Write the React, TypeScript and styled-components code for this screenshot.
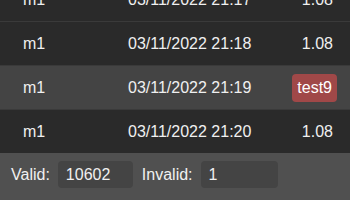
import React from "react";
import styled, { createGlobalStyle } from "styled-components";

const Global = createGlobalStyle`
  html, body { margin: 0; padding: 0; background: #505050; }
  body { font-family: "Liberation Sans", Arial, sans-serif; font-size: 16px; color: #f0f0f0; overflow: hidden; }
`;

const Page = styled.div`
  width: 350px;
  height: 200px;
  overflow: hidden;
  display: flex;
  flex-direction: column;
`;

const List = styled.div`
  margin-top: -22px;
  display: flex;
  flex-direction: column;
`;

const Row = styled.div<{ $active?: boolean; $last?: boolean }>`
  display: grid;
  grid-template-columns: 105px 1fr auto;
  align-items: center;
  height: 43px;
  padding: 0 17px 0 23px;
  background: ${(p) => (p.$active ? "#444444" : "#2a2a2a")};
  border-bottom: ${(p) => (p.$last ? "none" : "1px solid #3a3a3a")};
`;

const Cell = styled.span<{ $right?: boolean }>`
  text-align: ${(p) => (p.$right ? "right" : "left")};
  white-space: nowrap;
`;

const Badge = styled.span`
  display: inline-block;
  background: #a04848;
  color: #fff;
  border-radius: 4px;
  padding: 0 5px;
  height: 28px;
  line-height: 28px;
  margin-right: -4px;
`;

const Footer = styled.div`
  display: flex;
  align-items: center;
  padding: 8px 11px;
  background: #505050;
  flex: 1;
  align-items: flex-start;
`;

const Label = styled.span`
  margin-right: 8px;
  line-height: 27px;
`;

const Box = styled.div<{ $w: number }>`
  width: ${(p) => p.$w}px;
  height: 27px;
  line-height: 27px;
  box-sizing: border-box;
  padding-left: 8px;
  background: #444444;
  border-radius: 4px;
  margin-right: 9px;
`;

const rows = [
  { name: "m1", time: "03/11/2022 21:17", value: "1.08" },
  { name: "m1", time: "03/11/2022 21:18", value: "1.08" },
  { name: "m1", time: "03/11/2022 21:19", value: "test9", bad: true },
  { name: "m1", time: "03/11/2022 21:20", value: "1.08" },
];

export default function App() {
  return (
    <Page>
      <Global />
      <List>
        {rows.map((r, i) => (
          <Row key={i} $active={r.bad} $last={i === rows.length - 1}>
            <Cell>{r.name}</Cell>
            <Cell>{r.time}</Cell>
            <Cell $right>{r.bad ? <Badge>{r.value}</Badge> : r.value}</Cell>
          </Row>
        ))}
      </List>
      <Footer>
        <Label>Valid:</Label>
        <Box $w={75}>10602</Box>
        <Label>Invalid:</Label>
        <Box $w={77}>1</Box>
      </Footer>
    </Page>
  );
}
